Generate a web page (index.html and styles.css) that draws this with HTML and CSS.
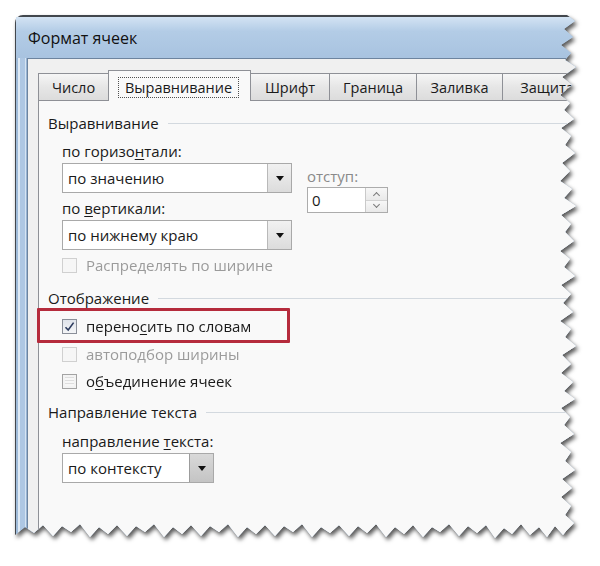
FILE: index.html
```html
<!DOCTYPE html>
<html lang="ru">
<head>
<meta charset="utf-8">
<title>Формат ячеек</title>
<link rel="stylesheet" href="styles.css">
</head>
<body>
<div class="stage">
  <div class="sheet">
    <div class="window">
      <div class="titlebar">Формат ячеек</div>
      <div class="frame">
        <div class="client">
          <div class="tabs">
            <div class="tab tab-w70">Число</div>
            <div class="tab tab-active"><span class="focus">Выравнивание</span></div>
            <div class="tab tab-w79">Шрифт</div>
            <div class="tab tab-w87">Граница</div>
            <div class="tab tab-w86">Заливка</div>
            <div class="tab tab-w80">Защита</div>
          </div>
          <div class="panel">
            <div class="group-head head-1"><span>Выравнивание</span></div>
            <div class="group-body">
              <div class="align-row">
                <div class="align-left">
                  <div class="label label-first">по горизо<u>н</u>тали:</div>
                  <div class="select select-wide"><span class="select-text">по значению</span><span class="drop"><i class="tri"></i></span></div>
                  <div class="label">по <u>в</u>ертикали:</div>
                  <div class="select select-wide"><span class="select-text">по нижнему краю</span><span class="drop"><i class="tri"></i></span></div>
                </div>
                <div class="align-right">
                  <div class="label label-muted">отступ:</div>
                  <div class="spin"><span class="spin-text">0</span><span class="spin-btns"><span class="spin-btn"><i class="chev-up"></i></span><span class="spin-btn"><i class="chev-down"></i></span></span></div>
                </div>
              </div>
              <div class="check-row row-distribute"><span class="box box-disabled"></span><span class="muted">Распределять по ширине</span></div>
            </div>
            <div class="group-head head-2"><span>Отображение</span></div>
            <div class="group-body">
              <div class="check-row row-wrap">
                <span class="box box-checked"><svg width="11" height="11" viewBox="0 0 11 11"><path d="M1.5 6.2 L4.2 9 L9.6 1.6" fill="none" stroke="#2c3b5e" stroke-width="1.6"/></svg></span>
                <span>перено<u>с</u>ить по словам</span>
                <span class="highlight"></span>
              </div>
              <div class="check-row row-fit"><span class="box box-disabled"></span><span class="muted">автоподбор ширины</span></div>
              <div class="check-row row-merge"><span class="box box-mixed"></span><span>о<u>б</u>ъединение ячеек</span></div>
            </div>
            <div class="group-head head-3"><span>Направление текста</span></div>
            <div class="group-body">
              <div class="label label-dir">направление <u>т</u>екста:</div>
              <div class="select select-narrow"><span class="select-text">по контексту</span><span class="drop drop-hover"><i class="tri"></i></span></div>
            </div>
          </div>
        </div>
      </div>
    </div>
  </div>
</div>
</body>
</html>
```
FILE: styles.css
```css
* { box-sizing: border-box; }
html, body { margin: 0; padding: 0; background: #ffffff; }
body {
  width: 600px;
  height: 566px;
  overflow: hidden;
  font-family: "Open Sans", "Noto Sans", "DejaVu Sans", sans-serif;
  font-size: 15px;
  color: #1a1a1a;
}
u { text-decoration: underline; text-underline-offset: 2px; }

.stage { padding: 15px 0 0 15px; }
.sheet {
  width: 565px;
  height: 530px;
  filter: drop-shadow(2px 3px 2px rgba(0, 0, 0, 0.65));
}
.window {
  width: 565px;
  height: 530px;
  display: flex;
  flex-direction: column;
  border-top: 2px solid #42474d;
  border-left: 1px solid #42474d;
  border-radius: 8px 0 0 0;
  background: #b4cce6;
  clip-path: polygon(0 0, 552px 0, 560px 6px, 549px 14px, 558px 22px, 546px 30px, 556px 38px, 550px 45px, 561px 52px, 547px 62px, 557px 70px, 545px 80px, 555px 88px, 549px 95px, 559px 104px, 546px 113px, 556px 121px, 550px 130px, 560px 138px, 547px 148px, 555px 156px, 545px 166px, 557px 174px, 549px 183px, 561px 191px, 546px 200px, 556px 209px, 550px 217px, 559px 226px, 545px 236px, 555px 244px, 549px 252px, 560px 261px, 546px 270px, 556px 279px, 548px 288px, 558px 297px, 545px 306px, 556px 314px, 550px 322px, 561px 331px, 547px 340px, 556px 349px, 546px 358px, 558px 367px, 549px 376px, 560px 384px, 546px 393px, 555px 402px, 549px 410px, 559px 419px, 545px 428px, 556px 437px, 550px 446px, 560px 455px, 547px 464px, 557px 473px, 546px 482px, 556px 491px, 550px 500px, 559px 508px, 552px 515px, 548px 520px, 540px 511px, 532px 522px, 524px 512px, 515px 520px, 506px 509px, 497px 519px, 489px 513px, 480px 523px, 471px 510px, 462px 518px, 453px 511px, 444px 521px, 434px 509px, 425px 517px, 417px 512px, 408px 522px, 398px 510px, 389px 519px, 380px 512px, 371px 522px, 361px 509px, 352px 518px, 343px 511px, 334px 521px, 324px 510px, 315px 518px, 306px 512px, 297px 522px, 287px 509px, 278px 517px, 269px 511px, 260px 521px, 250px 510px, 241px 519px, 232px 512px, 223px 522px, 213px 509px, 204px 517px, 195px 511px, 186px 521px, 176px 510px, 167px 519px, 158px 512px, 149px 522px, 139px 509px, 130px 517px, 121px 511px, 112px 521px, 102px 510px, 93px 519px, 84px 512px, 75px 522px, 65px 509px, 56px 517px, 47px 511px, 38px 521px, 28px 510px, 19px 518px, 10px 512px, 0 520px);
}

.titlebar {
  height: 41px;
  padding: 11px 0 0 12px;
  font-size: 16px;
  line-height: 20px;
  color: #111;
  background: linear-gradient(#d3e3f3, #b3cce6 35%, #a8c3e0);
}

.frame {
  flex: 1;
  display: flex;
  padding-left: 11px;
  background: linear-gradient(90deg, #9fbbd9 0 2px, #dfeaf5 2px 4px, #aec7e3 4px 9px, #d6e4f2 9px 10px, #98b4d4 10px 11px);
}

.client {
  flex: 1;
  display: flex;
  flex-direction: column;
  background: #f0f0f0;
  border-top: 1px solid #6d849f;
  border-left: 1px solid #6d849f;
  padding: 11px 0 0 10px;
}

.tabs {
  display: flex;
  align-items: flex-end;
  height: 30px;
  position: relative;
  z-index: 1;
  font-size: 14.5px;
}
.tab {
  height: 27px;
  flex: none;
  display: flex;
  align-items: center;
  justify-content: center;
  border: 1px solid #8e9096;
  border-bottom: 0;
  margin-right: -1px;
  background: linear-gradient(#f6f6f6, #e6e6e6 50%, #dcdcdc);
  color: #1a1a1a;
  white-space: nowrap;
}
.tab-w70 { width: 71px; }
.tab-w79 { width: 80px; }
.tab-w87 { width: 88px; }
.tab-w86 { width: 87px; }
.tab-w80 { width: 90px; }
.tab-active {
  width: 143px;
  height: 31px;
  margin-bottom: -1px;
  padding-top: 2px;
  background: #f9f9f9;
  justify-content: flex-start;
  padding-left: 9px;
}
.focus {
  border: 1px dotted #505050;
  padding: 0 6px;
  line-height: 19px;
}

.panel {
  flex: 1;
  background: #f9f9f9;
  border-top: 1px solid #8e9096;
  border-left: 1px solid #8e9096;
  padding-top: 10px;
}

.group-head {
  display: flex;
  align-items: center;
  height: 24px;
  padding-left: 9px;
  white-space: nowrap;
}
.group-head::after {
  content: "";
  flex: 1;
  height: 1px;
  margin-left: 9px;
  background: #d3d9df;
}
.head-2 { margin-top: 10px; }
.head-3 { margin-top: 8px; }

.group-body { padding-left: 23px; }

.align-row { display: flex; }
.align-left { width: 230px; }
.align-right { margin-left: 15px; padding-top: 30px; }

.label {
  height: 22px;
  line-height: 22px;
  margin-top: 4px;
  white-space: nowrap;
}
.label-first { margin-top: 5px; }
.label-muted { margin-top: 0; color: #8a8a8a; }
.label-dir { margin-top: 6px; }

.select {
  display: flex;
  height: 30px;
  margin-top: 1px;
  background: #fff;
  border: 1px solid #a9a9a9;
}
.select-wide { width: 230px; }
.select-narrow { width: 152px; }
.select-text {
  flex: 1;
  line-height: 28px;
  padding-left: 5px;
  white-space: nowrap;
}
.drop {
  width: 24px;
  display: flex;
  align-items: center;
  justify-content: center;
  border-left: 1px solid #b9b9b9;
  background: linear-gradient(#f1f1f1, #dcdcdc);
}
.drop-hover { background: linear-gradient(#d9d9d9, #c4c4c4); border-left-color: #9c9c9c; }
.tri {
  width: 0;
  height: 0;
  border-left: 4px solid transparent;
  border-right: 4px solid transparent;
  border-top: 5px solid #111;
}

.spin {
  display: flex;
  width: 81px;
  height: 26px;
  background: #fff;
  border: 1px solid #acacac;
}
.spin-text { flex: 1; padding-left: 4px; line-height: 24px; }
.spin-btns {
  width: 22px;
  display: flex;
  flex-direction: column;
  border-left: 1px solid #c9c9c9;
}
.spin-btn {
  flex: 1;
  display: flex;
  align-items: center;
  justify-content: center;
  background: linear-gradient(#f7f7f7, #e9e9e9);
}
.spin-btn + .spin-btn { border-top: 1px solid #d2d2d2; }
.chev-up, .chev-down {
  width: 5px;
  height: 5px;
  border-left: 1px solid #7a7a7a;
  border-top: 1px solid #7a7a7a;
}
.chev-up { transform: translateY(2px) rotate(45deg); }
.chev-down { transform: translateY(-2px) rotate(225deg); }

.check-row {
  position: relative;
  display: flex;
  align-items: center;
  height: 22px;
  white-space: nowrap;
}
.row-distribute { margin-top: 4px; }
.row-wrap { margin-top: 5px; }
.row-fit { margin-top: 6px; }
.row-merge { margin-top: 5px; }

.box {
  width: 15px;
  height: 15px;
  margin-right: 9px;
  flex: none;
  display: flex;
  align-items: center;
  justify-content: center;
}
.box-disabled { border: 1px solid #d0d0d0; background: #f6f6f6; }
.box-checked {
  border: 1px solid #8a8f99;
  background: linear-gradient(#dfe3ea, #f4f5f7);
}
.box-mixed {
  border: 1px solid #a3a3a3;
  background: repeating-linear-gradient(#f7f7f7 0 2px, #dedede 2px 3px);
  box-shadow: inset 0 0 0 2px #f3f3f3;
}
.muted { color: #9b9b9b; }

.highlight {
  position: absolute;
  left: -25px;
  top: -7px;
  width: 253px;
  height: 35px;
  border: 3px solid #b52b3c;
  border-radius: 1px;
}
```
